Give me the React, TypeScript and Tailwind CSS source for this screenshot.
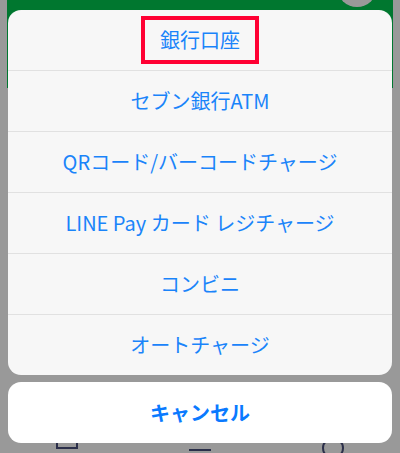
const options = [
  "セブン銀行ATM",
  "QRコード/バーコードチャージ",
  "LINE Pay カード レジチャージ",
  "コンビニ",
  "オートチャージ",
];

export default function App() {
  return (
    <div
      className="relative w-[400px] h-[453px] overflow-hidden bg-[#999999]"
      style={{ fontFamily: '"Noto Sans CJK JP", "Noto Sans", sans-serif' }}
    >
      {/* page behind the dimmed overlay */}
      <div className="absolute inset-0 flex flex-col">
        <div className="mx-[7px] h-[88px] bg-[#00772f] flex justify-end pr-[16px]">
          <div className="w-[40px] h-[40px] -mt-[33px] rounded-full bg-[#999999]" />
        </div>
        <div className="flex-1" />
        <div className="h-[23px] flex justify-around items-start pt-[7px]">
          <div className="w-[22px] h-[12px] border-2 border-[#2b2f4a]" />
          <div className="w-[22px] h-[12px] pt-[12px]">
            <div className="h-[2px] bg-[#2b2f4a]" />
          </div>
          <div className="w-[22px] h-[22px] rounded-full border-2 border-[#2b2f4a]" />
        </div>
      </div>

      <div className="relative flex flex-col gap-[7px] px-[8px] pt-[10px]">
        {/* action sheet */}
        <div className="rounded-[13px] bg-[#f7f7f7] overflow-hidden">
          <div className="h-[60px] flex items-center justify-center">
            <div className="w-[118px] h-[48px] border-4 border-[#ff0033] flex items-center justify-center text-[20px] text-[#1a84fa]">
              銀行口座
            </div>
          </div>
          {options.map((o) => (
            <div
              key={o}
              className="h-[61px] border-t border-[#e1e1e1] flex items-center justify-center text-[20px] text-[#1a84fa]"
            >
              {o}
            </div>
          ))}
        </div>

        {/* cancel */}
        <div className="h-[61px] rounded-[13px] bg-white flex items-center justify-center text-[20px] font-bold text-[#0a7aff]">
          キャンセル
        </div>
      </div>
    </div>
  );
}
